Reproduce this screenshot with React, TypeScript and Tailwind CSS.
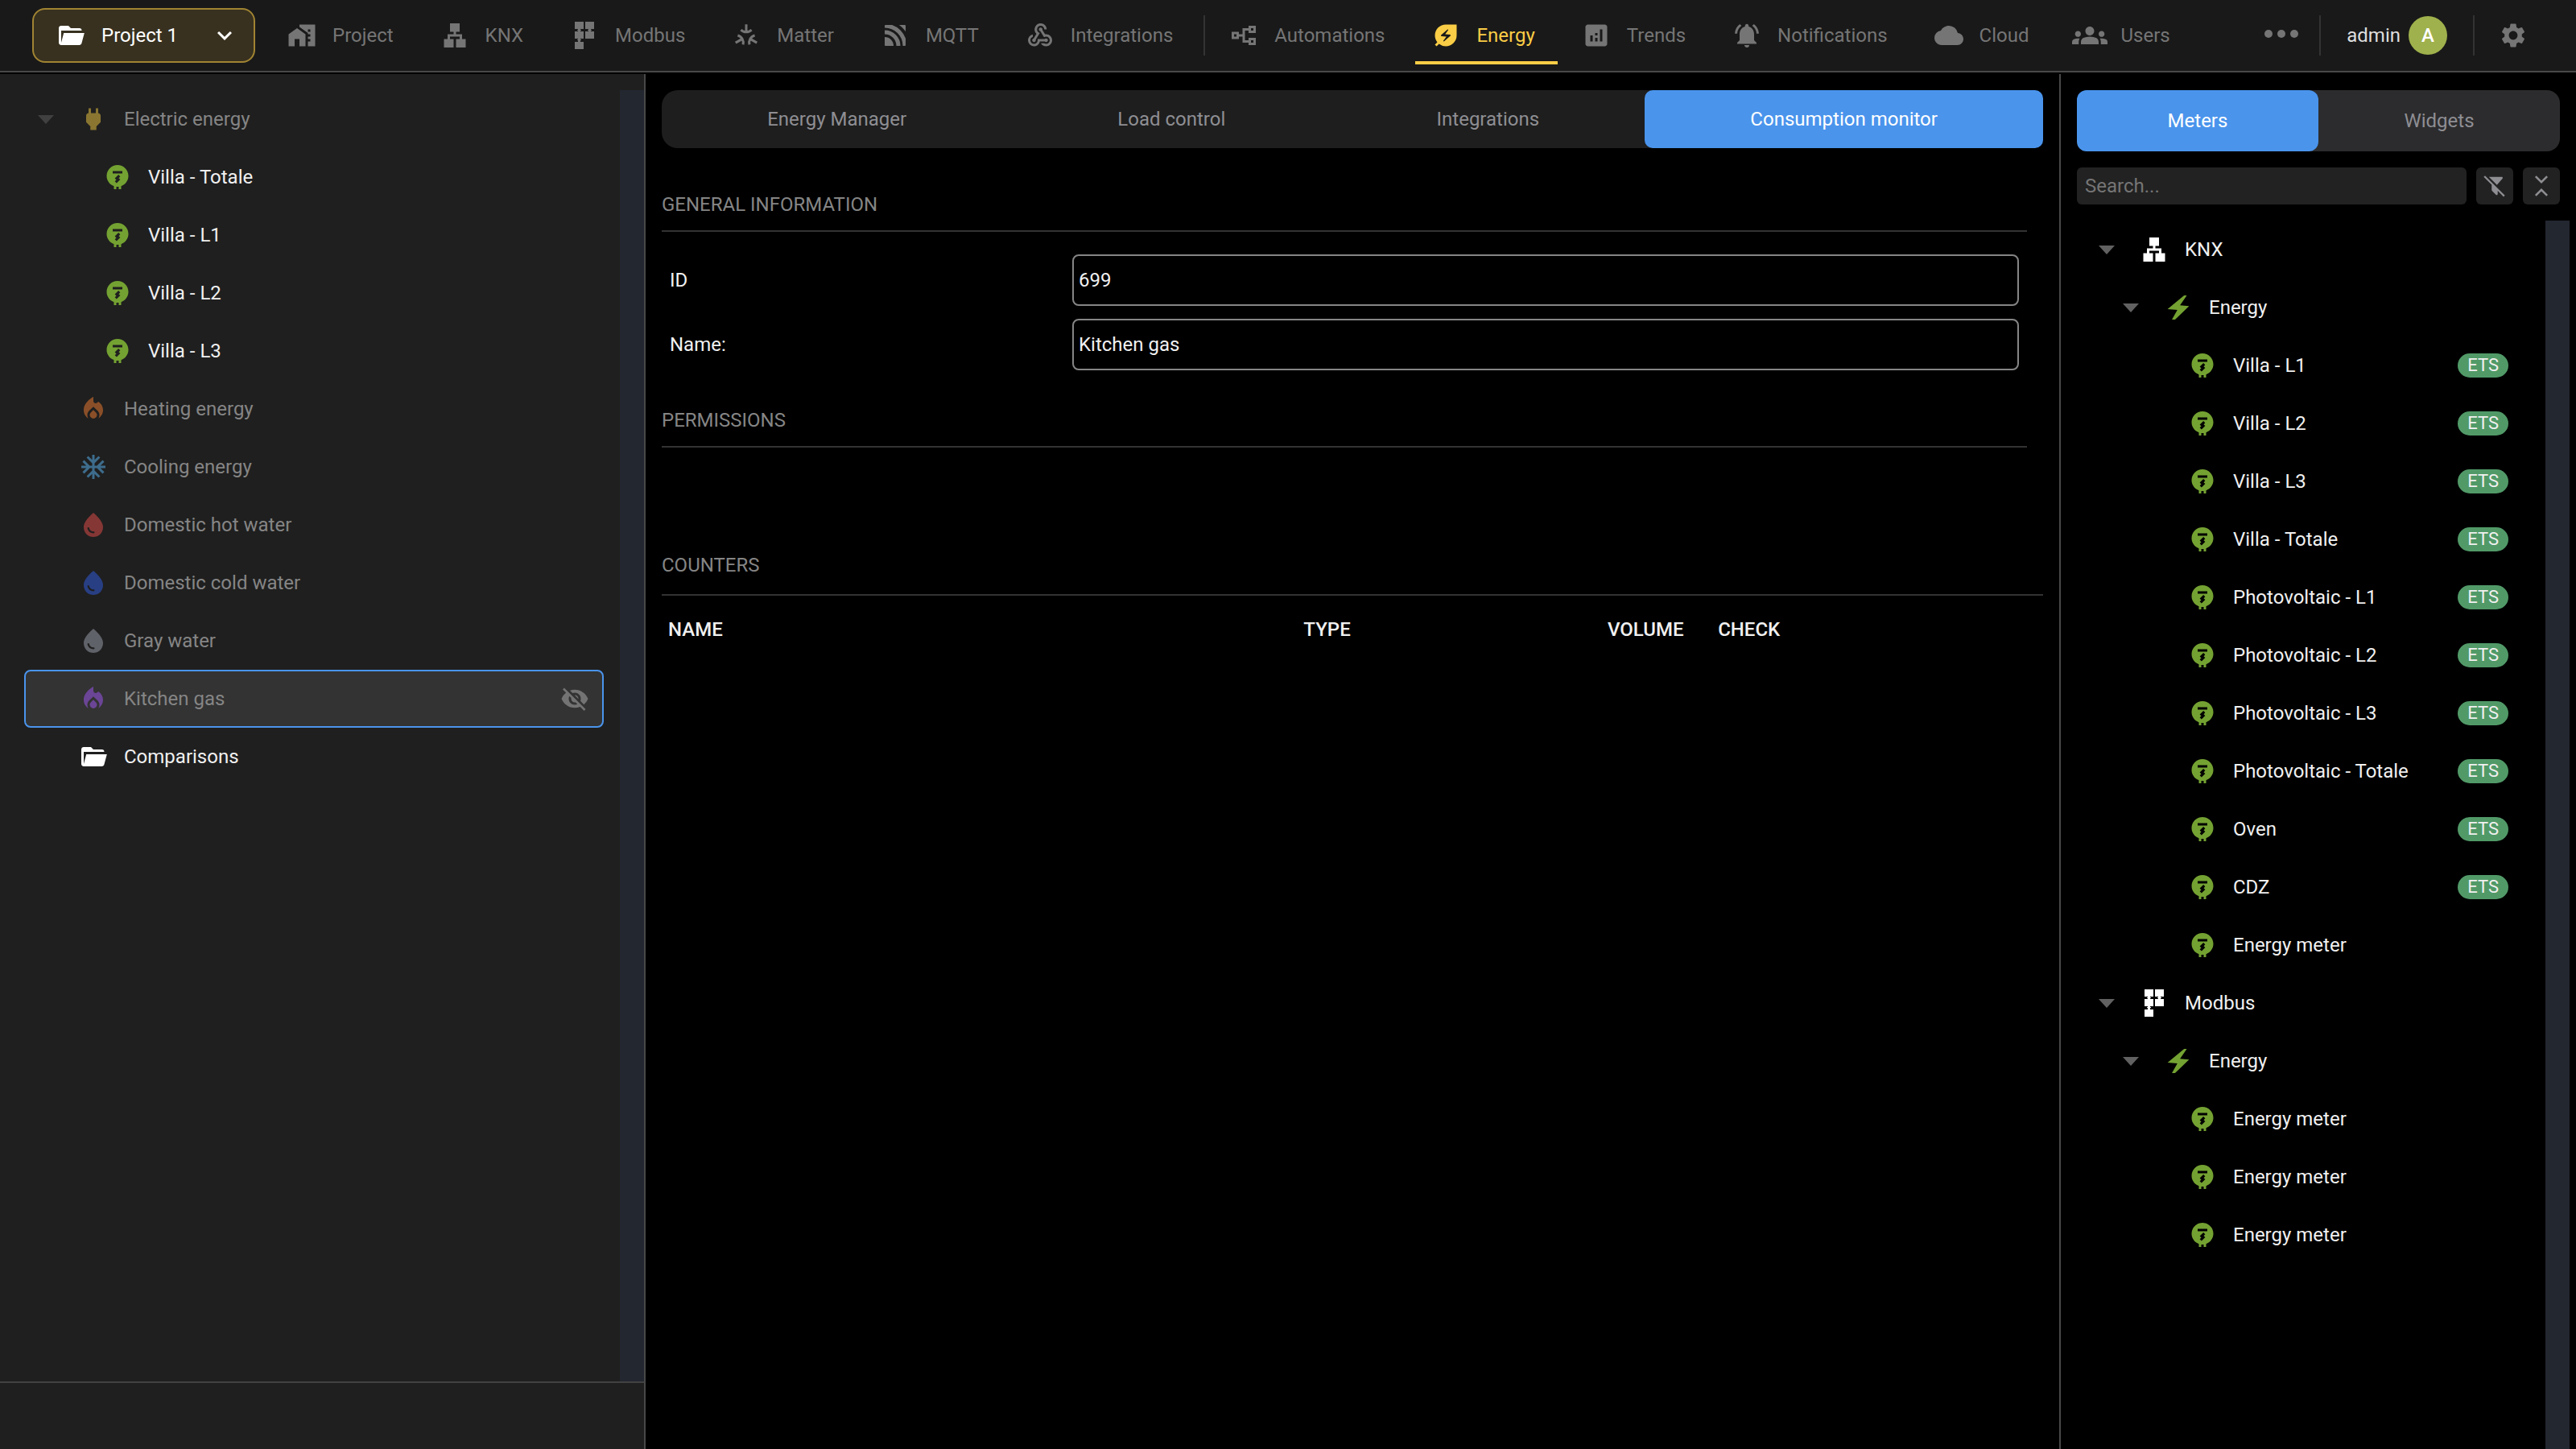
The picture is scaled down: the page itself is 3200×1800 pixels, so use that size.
import type { ComponentType } from "react";
import {
  MdAcUnit,
  MdAnalytics,
  MdCloud,
  MdElectricMeter,
  MdEnergySavingsLeaf,
  MdExpandMore,
  MdGroups,
  MdHomeWork,
  MdLan,
  MdLocalFireDepartment,
  MdNotificationsActive,
  MdPower,
  MdSettings,
  MdVisibilityOff,
  MdWaterDrop,
  MdWebhook,
} from "react-icons/md";

type Icon = ComponentType<{ className?: string }>;

function FolderIcon({ className }: { className?: string }) {
  return (
    <svg viewBox="0 0 24 24" fill="currentColor" className={className}>
      <path d="M19 20H4c-1.11 0-2-.9-2-2V6c0-1.11.89-2 2-2h6l2 2h7a2 2 0 0 1 2 2H4v10l2.14-8h17.07l-2.28 8.5c-.23.87-1.01 1.5-1.93 1.5z" />
    </svg>
  );
}

function ModbusIcon({ className }: { className?: string }) {
  return (
    <svg viewBox="0 0 36 36" fill="currentColor" className={className}>
      <path d="M6 1h11v9H6zM19 1h11v9H19zM6 13h11v9H6zM19 13h11v9H19zM6 26h11v9H6z" />
      <path d="M10 9h3v5h-3zM23 9h3v5h-3zM10 21h3v6h-3zM9 11h5v1H9zM22 11h5v1h-5zM9 23h5v1H9z" />
    </svg>
  );
}

function MatterIcon({ className }: { className?: string }) {
  const arm = "M12 2.8v6.4M7.6 7.4c2.4 2.4 6.4 2.4 8.8 0";
  return (
    <svg viewBox="0 0 24 24" fill="none" stroke="currentColor" strokeWidth="2" className={className}>
      <path d={arm} />
      <path d={arm} transform="rotate(120 12 13)" />
      <path d={arm} transform="rotate(240 12 13)" />
    </svg>
  );
}

function MqttIcon({ className }: { className?: string }) {
  return (
    <svg viewBox="0 0 36 36" className={className}>
      <clipPath id="mqtt-box">
        <rect x="5" y="5" width="26" height="26" rx="1" />
      </clipPath>
      <g clipPath="url(#mqtt-box)" fill="none" stroke="currentColor" strokeWidth="5">
        <circle cx="5" cy="31" r="11" fill="currentColor" stroke="none" />
        <circle cx="5" cy="31" r="17" />
        <circle cx="5" cy="31" r="25" />
        <circle cx="5" cy="31" r="34" />
      </g>
    </svg>
  );
}

function FlowIcon({ className }: { className?: string }) {
  return (
    <svg viewBox="0 0 24 24" fill="none" stroke="currentColor" strokeWidth="2" className={className}>
      <path d="M3 10h4v4H3zM17 5h4v4h-4zM17 15h4v4h-4z" />
      <path d="M8 12h4M16 7h-4v10h4" />
    </svg>
  );
}

function BoltIcon({ className }: { className?: string }) {
  return (
    <svg viewBox="0 0 24 24" fill="currentColor" className={className}>
      <path d="M16.8 2 3.1 13.3l8.1.7L6.7 22h2.6L20.9 10.9l-7.5-.7L19 2z" />
    </svg>
  );
}

function FilterOffIcon({ className }: { className?: string }) {
  return (
    <svg viewBox="0 0 24 24" fill="currentColor" className={className}>
      <path d="M2.39 1.73 1.11 3 9 10.89v4.98c-.04.29.06.6.29.83l4.01 4.01a.996.996 0 0 0 1.41 0c.23-.21.33-.53.29-.83v-2.99l5.84 5.84 1.27-1.27L2.39 1.73zM6.21 3l8 8L19.8 4.62c.34-.43.26-1.06-.17-1.4-.19-.14-.4-.22-.62-.22H6.21z" />
    </svg>
  );
}

function CollapseIcon({ className }: { className?: string }) {
  return (
    <svg viewBox="0 0 24 24" fill="none" stroke="currentColor" strokeWidth="2" className={className}>
      <path d="m6.3 2.5 5.7 5.7 5.7-5.7M6.3 21.5l5.7-5.7 5.7 5.7" />
    </svg>
  );
}

function Caret({ className }: { className?: string }) {
  return (
    <svg viewBox="0 0 20 11" fill="currentColor" className={className}>
      <path d="M0 0h20L10 11z" />
    </svg>
  );
}

type NavEntry = { label: string; icon: Icon; active?: boolean; wide?: boolean };

const protocols: NavEntry[] = [
  { label: "Project", icon: MdHomeWork },
  { label: "KNX", icon: MdLan },
  { label: "Modbus", icon: ModbusIcon },
  { label: "Matter", icon: MatterIcon },
  { label: "MQTT", icon: MqttIcon },
  { label: "Integrations", icon: MdWebhook },
];

const modules: NavEntry[] = [
  { label: "Automations", icon: FlowIcon },
  { label: "Energy", icon: MdEnergySavingsLeaf, active: true },
  { label: "Trends", icon: MdAnalytics },
  { label: "Notifications", icon: MdNotificationsActive },
  { label: "Cloud", icon: MdCloud },
  { label: "Users", icon: MdGroups, wide: true },
];

type Row = {
  label: string;
  icon: Icon;
  level: 0 | 1 | 2;
  color: string;
  open?: boolean;
  dim?: boolean;
  selected?: boolean;
  badge?: string;
};

const categories: Row[] = [
  { label: "Electric energy", icon: MdPower, level: 0, color: "text-[#8a7631]", open: true, dim: true },
  { label: "Villa - Totale", icon: MdElectricMeter, level: 1, color: "text-[#74a232]" },
  { label: "Villa - L1", icon: MdElectricMeter, level: 1, color: "text-[#74a232]" },
  { label: "Villa - L2", icon: MdElectricMeter, level: 1, color: "text-[#74a232]" },
  { label: "Villa - L3", icon: MdElectricMeter, level: 1, color: "text-[#74a232]" },
  { label: "Heating energy", icon: MdLocalFireDepartment, level: 0, color: "text-[#8a4f28]", dim: true },
  { label: "Cooling energy", icon: MdAcUnit, level: 0, color: "text-[#3d6c8c]", dim: true },
  { label: "Domestic hot water", icon: MdWaterDrop, level: 0, color: "text-[#853735]", dim: true },
  { label: "Domestic cold water", icon: MdWaterDrop, level: 0, color: "text-[#283f84]", dim: true },
  { label: "Gray water", icon: MdWaterDrop, level: 0, color: "text-[#606269]", dim: true },
  { label: "Kitchen gas", icon: MdLocalFireDepartment, level: 0, color: "text-[#6b4596]", dim: true, selected: true },
  { label: "Comparisons", icon: FolderIcon, level: 0, color: "text-white" },
];

const meter = (label: string, badge?: string): Row => ({
  label,
  badge,
  icon: MdElectricMeter,
  level: 2,
  color: "text-[#74a232]",
});

const meters: Row[] = [
  { label: "KNX", icon: MdLan, level: 0, color: "text-white", open: true },
  { label: "Energy", icon: BoltIcon, level: 1, color: "text-[#74a232]", open: true },
  meter("Villa - L1", "ETS"),
  meter("Villa - L2", "ETS"),
  meter("Villa - L3", "ETS"),
  meter("Villa - Totale", "ETS"),
  meter("Photovoltaic - L1", "ETS"),
  meter("Photovoltaic - L2", "ETS"),
  meter("Photovoltaic - L3", "ETS"),
  meter("Photovoltaic - Totale", "ETS"),
  meter("Oven", "ETS"),
  meter("CDZ", "ETS"),
  meter("Energy meter"),
  { label: "Modbus", icon: ModbusIcon, level: 0, color: "text-white", open: true },
  { label: "Energy", icon: BoltIcon, level: 1, color: "text-[#74a232]", open: true },
  meter("Energy meter"),
  meter("Energy meter"),
  meter("Energy meter"),
];

const indent = { 0: "pl-[10px]", 1: "pl-[40px]", 2: "pl-[70px]" };

const tabs = ["Energy Manager", "Load control", "Integrations", "Consumption monitor"];

function NavItem({ label, icon: IconView, active, wide }: NavEntry) {
  return (
    <a
      href="#"
      className={`flex items-center h-[72px] pl-5 pr-7 gap-5 relative ${
        active ? "text-[#facd46] after:absolute after:inset-x-0 after:bottom-0 after:h-1 after:bg-[#facd46]" : "text-[#757575]"
      }`}
    >
      <IconView className={wide ? "size-11 -mx-1 shrink-0" : "size-9 shrink-0"} />
      {label}
    </a>
  );
}

function TreeRow({ row }: { row: Row }) {
  const IconView = row.icon;
  return (
    <li>
      <button
        type="button"
        className={`flex items-center w-full h-[72px] pr-4 text-left rounded-lg border-2 ${indent[row.level]} ${
          row.selected ? "border-[#4a94ec] bg-[#333333]" : "border-transparent"
        }`}
      >
        <span className="w-[30px] mr-[26px] flex justify-center shrink-0">
          {row.open && <Caret className={row.dim ? "w-5 text-[#404040]" : "w-5 text-[#616161]"} />}
        </span>
        <IconView className={`size-9 shrink-0 mr-5 ${row.color}`} />
        <span className={row.dim ? "flex-1 text-[#858585]" : "flex-1 text-[#f0f0f0]"}>{row.label}</span>
        {row.selected && <MdVisibilityOff className="size-9 text-[#737373]" />}
        {row.badge && (
          <span className="h-[30px] px-3 rounded-full bg-[#519a68] text-[#f0f0f0] text-[22px] leading-[30px]">
            {row.badge}
          </span>
        )}
      </button>
    </li>
  );
}

function Field({ id, label, value }: { id: string; label: string; value: string }) {
  return (
    <div className="flex items-center px-[10px] text-[#f0f0f0]">
      <label htmlFor={id} className="w-[500px]">
        {label}
      </label>
      <input
        id={id}
        defaultValue={value}
        className="flex-1 min-w-0 h-16 px-[6px] rounded-lg border-2 border-[#858585] bg-black outline-none"
      />
    </div>
  );
}

function Header() {
  return (
    <header className="flex items-center h-[90px] shrink-0 pl-10 bg-[#191919] border-b-2 border-[#484848] whitespace-nowrap">
      <button
        type="button"
        className="flex items-center w-[277px] h-[68px] shrink-0 pl-7 pr-[18px] mr-5 rounded-2xl border-2 border-[#a08432] bg-[#383120] text-white"
      >
        <FolderIcon className="size-9 mr-5" />
        Project 1
        <MdExpandMore className="size-9 ml-auto" />
      </button>
      <nav className="flex items-center gap-[10px]">
        {protocols.map((item) => (
          <NavItem key={item.label} {...item} />
        ))}
        <span className="w-[2px] h-[50px] bg-[#333333]" />
        {modules.map((item) => (
          <NavItem key={item.label} {...item} />
        ))}
      </nav>
      <div className="flex items-center ml-auto">
        <button type="button" aria-label="More" className="flex gap-[6px] pb-1 mr-[26px]">
          <span className="size-[10px] rounded-full bg-[#757575]" />
          <span className="size-[10px] rounded-full bg-[#757575]" />
          <span className="size-[10px] rounded-full bg-[#757575]" />
        </button>
        <span className="w-[2px] h-[50px] bg-[#333333]" />
        <button type="button" className="flex items-center gap-[10px] mx-8 text-[#dedede]">
          admin
          <span className="flex items-center justify-center size-12 rounded-full bg-[#9fb14c] text-white font-medium">
            A
          </span>
        </button>
        <span className="w-[2px] h-[50px] bg-[#333333]" />
        <button type="button" aria-label="Settings" className="ml-[30px] mr-[60px] text-[#757575]">
          <MdSettings className="size-9" />
        </button>
      </div>
    </header>
  );
}

function Sidebar() {
  return (
    <aside className="box-content w-1/4 shrink-0 flex flex-col bg-[#1f1f1f] border-r-2 border-[#484848]">
      <div className="flex flex-1 pt-5">
        <ul className="flex-1 pl-[30px] pr-5">
          {categories.map((row) => (
            <TreeRow key={row.label} row={row} />
          ))}
        </ul>
        <div className="w-[30px] bg-[#232730]" />
      </div>
      <div className="h-[84px] border-t-2 border-[#424242]" />
    </aside>
  );
}

function Content() {
  return (
    <main className="flex-1 min-w-0 px-5 pt-5">
      <div role="tablist" className="flex h-[72px] rounded-[20px] bg-[#1e1e1e]">
        {tabs.map((tab, i) => (
          <button
            key={tab}
            type="button"
            role="tab"
            aria-selected={i === 3}
            className={`flex-auto ${i === 3 ? "bg-[#4a94ec] text-white rounded-[10px]" : "text-[#8e8e93]"}`}
          >
            {tab}
          </button>
        ))}
      </div>

      <section className="mt-14 pr-5">
        <h2 className="pb-[18px] border-b-2 border-[#333333] text-[#858585]">GENERAL INFORMATION</h2>
        <div className="flex flex-col gap-4 mt-7">
          <Field id="meter-id" label="ID" value="699" />
          <Field id="meter-name" label="Name:" value="Kitchen gas" />
        </div>
      </section>

      <section className="mt-12 pr-5">
        <h2 className="pb-[18px] border-b-2 border-[#333333] text-[#858585]">PERMISSIONS</h2>
      </section>

      <section className="mt-[132px]">
        <h2 className="pb-[22px] border-b-2 border-[#333333] text-[#858585]">COUNTERS</h2>
        <table className="table-fixed w-full mt-7 text-[#f0f0f0]">
          <thead>
            <tr className="text-left">
              <th className="w-[46%] px-2 font-medium">NAME</th>
              <th className="w-[22%] px-2 font-medium">TYPE</th>
              <th className="w-[8%] px-2 font-medium">VOLUME</th>
              <th className="w-[24%] px-2 font-medium">CHECK</th>
            </tr>
          </thead>
        </table>
      </section>
    </main>
  );
}

function MetersPanel() {
  return (
    <aside className="box-content w-1/5 shrink-0 flex flex-col border-l-2 border-[#484848]">
      <div className="px-5 pt-5">
        <div role="tablist" className="flex h-[76px] rounded-2xl bg-[#2c2c2e]">
          <button type="button" role="tab" aria-selected="true" className="flex-1 rounded-xl bg-[#4a94ec] text-white">
            Meters
          </button>
          <button type="button" role="tab" aria-selected="false" className="flex-1 text-[#8e8e93]">
            Widgets
          </button>
        </div>
        <div className="flex gap-3 mt-5 text-[#8e8e93]">
          <input
            type="search"
            aria-label="Search"
            placeholder="Search..."
            className="flex-1 min-w-0 h-[46px] px-[10px] rounded-md bg-[#222222] outline-none placeholder:text-[#757575]"
          />
          <button type="button" aria-label="Clear filter" className="flex items-center justify-center w-[46px] rounded-md bg-[#222222]">
            <FilterOffIcon className="size-[30px]" />
          </button>
          <button type="button" aria-label="Collapse all" className="flex items-center justify-center w-[46px] rounded-md bg-[#222222]">
            <CollapseIcon className="size-[30px]" />
          </button>
        </div>
      </div>
      <div className="flex flex-1 mt-5 pl-[30px] pr-2">
        <ul className="flex-1 pr-7">
          {meters.map((row, i) => (
            <TreeRow key={i} row={row} />
          ))}
        </ul>
        <div className="w-[30px] bg-[#232730]" />
      </div>
    </aside>
  );
}

export default function App() {
  return (
    <div className="flex flex-col min-h-screen bg-black font-['Roboto',sans-serif] text-[24px] leading-[28px]">
      <Header />
      <div className="flex flex-1 mt-[2px]">
        <Sidebar />
        <Content />
        <MetersPanel />
      </div>
    </div>
  );
}
